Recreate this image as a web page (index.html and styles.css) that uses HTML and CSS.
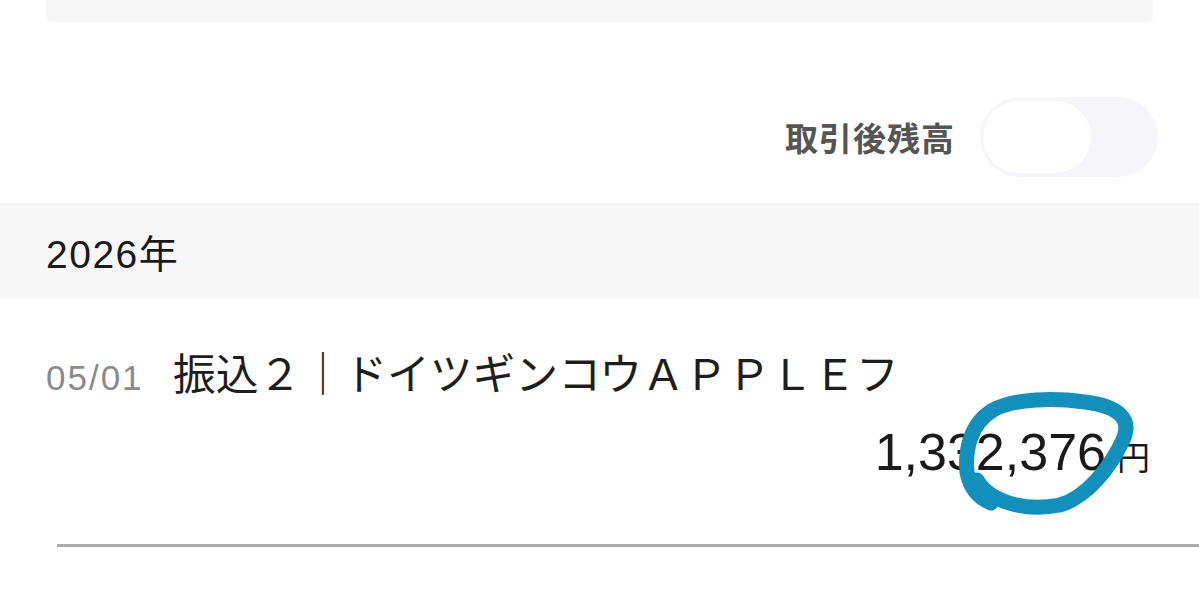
FILE: index.html
```html
<!DOCTYPE html>
<html lang="ja">
<head>
<meta charset="utf-8">
<title>取引明細</title>
<link rel="stylesheet" href="styles.css">
</head>
<body>
<div class="top-card"></div>

<div class="balance-row">
  <span class="balance-label">取引後残高</span>
  <div class="toggle"><div class="knob"></div></div>
</div>

<div class="year-band">2026年</div>

<div class="tx">
  <div class="tx-line">
    <span class="tx-date">05/01</span>
    <span class="tx-desc">振込２｜ドイツギンコウＡＰＰＬＥフ</span>
  </div>
  <div class="tx-amount">
    <span class="num">1,332,376</span><span class="yen">円</span>
  </div>
  <svg class="mark" width="185" height="130" viewBox="0 0 185 130">
    <path d="M22 90 C35 112 70 122 105 115 C132 107 155 78 168 50 C178 28 162 16 130 12 C100 8 60 8 38 20 C15 34 10 60 12 82 C15 98 24 108 36 113" fill="none" stroke="#1190bb" stroke-width="15" stroke-linecap="round" stroke-linejoin="round"/>
  </svg>
</div>

<div class="divider"></div>
</body>
</html>
```

FILE: styles.css
```css
html, body {
  margin: 0;
  padding: 0;
  background: #ffffff;
}

body {
  width: 1199px;
  height: 592px;
  overflow: hidden;
  font-family: "Liberation Sans", "Noto Sans CJK JP", sans-serif;
  color: #1e1e1e;
}

.top-card {
  margin: 0 46px;
  height: 22px;
  background: #f7f7f7;
  border-radius: 0 0 5px 5px;
}

.balance-row {
  display: flex;
  justify-content: flex-end;
  align-items: center;
  gap: 25px;
  margin-top: 75px;
  padding-right: 41px;
  height: 80px;
}

.balance-label {
  font-family: "Noto Sans CJK JP", sans-serif;
  font-weight: 700;
  font-size: 33px;
  color: #555555;
  letter-spacing: 1px;
}

.toggle {
  width: 178px;
  height: 80px;
  border-radius: 40px;
  background: #f6f6fa;
  box-sizing: border-box;
  padding: 4px 3px;
}

.knob {
  width: 108px;
  height: 72px;
  border-radius: 36px;
  background: #ffffff;
  box-shadow: 0 0 1px rgba(150, 150, 180, 0.06);
}

.year-band {
  margin-top: 26px;
  height: 95px;
  background: #f7f7f7;
  display: flex;
  align-items: center;
  padding-left: 46px;
  font-size: 39px;
  letter-spacing: 1.5px;
  color: #1a1a1a;
}

.tx {
  position: relative;
  height: 246px;
}

.tx-line {
  display: flex;
  align-items: baseline;
  padding-top: 48px;
  padding-left: 46px;
}

.tx-date {
  width: 127px;
  font-size: 35px;
  letter-spacing: 2px;
  color: #8a8a8a;
}

.tx-desc {
  font-family: "Noto Sans CJK JP", sans-serif;
  font-size: 42.8px;
  color: #1e1e1e;
  line-height: 1.2;
}

.tx-amount {
  display: flex;
  justify-content: flex-end;
  align-items: baseline;
  padding-right: 49px;
  margin-top: 24px;
}

.num {
  font-size: 52px;
  color: #1a1a1a;
}

.yen {
  font-family: "Noto Sans CJK JP", sans-serif;
  font-size: 33px;
  margin-left: 11px;
  color: #1a1a1a;
}

.mark {
  position: absolute;
  left: 955px;
  top: 92px;
}

.divider {
  margin-left: 57px;
  height: 3px;
  background: #a9a9a9;
}
```
